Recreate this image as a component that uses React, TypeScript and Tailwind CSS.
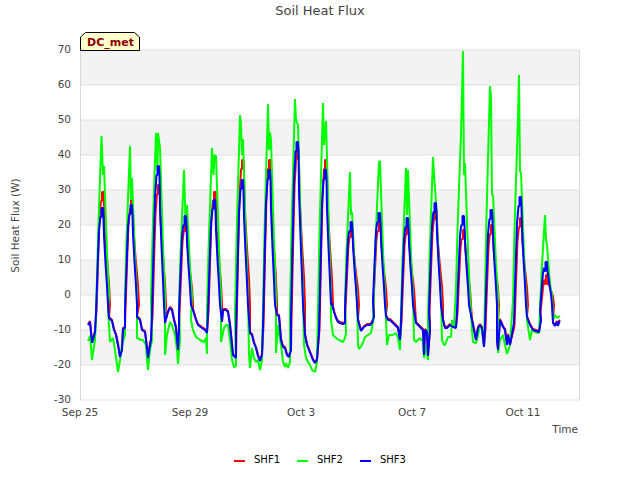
type P = [number, number];
type Cycle = { c: number; b: number; r: number; g: P[] };

const cycles: Cycle[] = [
  { c: 102, b: 208, r: 192, g: [[101.5, 136], [103, 175], [104, 166]] },
  { c: 131, b: 205, r: 200, g: [[130, 146], [131, 200], [132, 178]] },
  { c: 158, b: 166, r: 185, g: [[156, 133], [157.5, 170], [158, 133], [160, 148]] },
  { c: 185, b: 216, r: 222, g: [[184, 170], [185.5, 220], [187, 205]] },
  { c: 214, b: 200, r: 192, g: [[212, 148], [213.5, 175], [214.5, 155], [216, 156]] },
  { c: 242, b: 180, r: 160, g: [[240, 115], [241, 124], [242, 155], [243, 139]] },
  { c: 269, b: 170, r: 160, g: [[268, 104], [269, 150], [270, 132], [271, 140]] },
  { c: 297, b: 142, r: 150, g: [[295, 99], [296, 120], [298, 125]] },
  { c: 325, b: 170, r: 160, g: [[323, 103], [324, 145], [326, 121]] },
  { c: 351, b: 222, r: 228, g: [[350, 172], [351, 215], [352, 212]] },
  { c: 379, b: 213, r: 222, g: [[379, 162], [380, 161]] },
  { c: 407, b: 218, r: 225, g: [[406, 168], [407, 215], [408, 170]] },
  { c: 435, b: 203, r: 210, g: [[433, 157], [434, 175], [436, 202]] },
  { c: 463, b: 216, r: 230, g: [[461, 134], [463, 51], [464, 175], [465, 163]] },
  { c: 491, b: 210, r: 225, g: [[490, 86], [491, 97], [492, 195], [493, 195]] },
  { c: 520, b: 197, r: 218, g: [[518, 117], [519, 75], [520, 172], [521, 172]] },
  { c: 546, b: 262, r: 275, g: [[545, 215], [546, 240], [547, 245]] },
];

const nightsB: P[][] = [
  [[88, 325], [90, 322], [92, 343], [95, 332]],
  [[109, 318], [112, 321], [114, 330], [116, 335], [118, 345], [120, 357], [122, 350], [123, 329], [125, 328]],
  [[137, 317], [140, 320], [142, 330], [145, 332], [146, 340], [148, 358], [150, 345], [151, 340]],
  [[165, 323], [168, 312], [170, 308], [172, 310], [174, 320], [176, 328], [178, 350], [179, 330]],
  [[193, 310], [196, 320], [198, 325], [202, 328], [205, 330], [207, 333]],
  [[222, 322], [223, 310], [226, 310], [228, 312], [230, 325], [232, 345], [233, 355], [236, 358]],
  [[250, 333], [252, 335], [254, 343], [256, 348], [258, 356], [260, 361], [262, 355]],
  [[277, 315], [279, 316], [281, 340], [283, 347], [285, 348], [287, 355], [289, 357], [291, 350]],
  [[305, 335], [307, 345], [309, 350], [311, 355], [313, 360], [315, 363], [317, 360]],
  [[332, 303], [334, 312], [336, 318], [338, 322], [340, 323], [343, 324], [345, 323]],
  [[358, 320], [361, 331], [364, 327], [367, 325], [370, 325], [372, 323], [374, 317]],
  [[386, 316], [388, 320], [390, 320], [392, 322], [395, 325], [398, 328], [400, 340]],
  [[416, 323], [420, 327], [423, 330], [424, 355], [425, 330], [427, 332], [428, 356], [430, 330]],
  [[443, 320], [445, 328], [447, 328], [450, 325], [453, 327], [456, 328]],
  [[472, 320], [474, 330], [476, 340], [478, 328], [480, 325], [482, 328], [484, 347]],
  [[497, 340], [498, 350], [500, 320], [503, 327], [505, 330], [507, 345], [508, 335], [510, 345]],
  [[527, 317], [530, 325], [533, 330], [536, 331], [539, 332], [541, 320]],
  [[553, 323], [555, 326], [557, 322], [558, 326], [559, 322], [560, 321]],
];

const nightsG: P[][] = [
  [[88, 341], [90, 336], [92, 360], [95, 340]],
  [[108, 310], [110, 342], [113, 338], [115, 350], [118, 372], [120, 360], [122, 345], [125, 335]],
  [[137, 338], [141, 340], [143, 340], [146, 345], [147, 360], [148, 370], [150, 350], [152, 340]],
  [[165, 355], [167, 335], [170, 322], [172, 325], [175, 335], [177, 350], [178, 364], [180, 340]],
  [[191, 320], [193, 330], [196, 337], [200, 340], [204, 342], [206, 338], [207, 354]],
  [[221, 342], [224, 328], [226, 325], [228, 325], [230, 340], [232, 360], [234, 367], [236, 366]],
  [[249, 355], [250, 368], [252, 348], [254, 358], [256, 362], [258, 360], [260, 370], [262, 360]],
  [[276, 353], [278, 325], [281, 345], [283, 362], [285, 367], [286, 363], [288, 368], [290, 362]],
  [[304, 345], [306, 358], [308, 362], [310, 365], [312, 370], [315, 372], [317, 362]],
  [[331, 320], [333, 335], [336, 338], [339, 340], [343, 342], [345, 338], [346, 333]],
  [[358, 345], [359, 349], [362, 345], [365, 337], [368, 335], [371, 333], [373, 322]],
  [[387, 345], [389, 335], [393, 335], [396, 333], [398, 338], [400, 350]],
  [[414, 340], [416, 342], [420, 338], [423, 342], [424, 358], [426, 345], [428, 360]],
  [[442, 340], [444, 345], [445, 345], [448, 337], [451, 337], [452, 320], [454, 327]],
  [[472, 330], [473, 342], [476, 343], [477, 340], [480, 325], [482, 330], [484, 347]],
  [[498, 353], [500, 340], [503, 335], [505, 345], [507, 354], [510, 345]],
  [[527, 320], [530, 340], [532, 330], [535, 332], [539, 333]],
  [[553, 320], [555, 315], [557, 318], [560, 316]],
];

const lerp = (a: number, b: number, t: number) => a + (b - a) * t;

function buildBlue(offsetY: number, key: "b" | "r", shift: number, fall: number): string {
  const pts: P[] = [];
  nightsB.forEach((n, i) => {
    n.forEach(([x, y]) => pts.push([x, y + offsetY]));
    const cy = cycles[i];
    if (!cy) return;
    const top = cy[key];
    const c = cy.c + shift;
    const last = n[n.length - 1][1];
    pts.push(
      [c - 6, lerp(last, top, 0.15)],
      [c - 4.5, lerp(last, top, 0.5)],
      [c - 3, lerp(last, top, 0.82)],
      [c - 2, lerp(last, top, 0.9)],
      [c - 1.5, top + 9],
      [c - 0.5, top + 9],
      [c - 0.5, top],
      [c + 1, top],
      [c + 1.5, top + 10],
      [c + 2, lerp(top, 300, 0.3)],
      [c + 3.5 + fall * 0.5, lerp(top, 300, 0.6)],
      [c + 5 + fall, lerp(top, 300, 0.85)],
      [c + 6 + fall, 305],
    );
  });
  return pts.map((p) => p.join(",")).join(" ");
}

function buildGreen(): string {
  const pts: P[] = [];
  nightsG.forEach((n, i) => {
    n.forEach((p) => pts.push(p));
    const cy = cycles[i];
    if (!cy) return;
    const first = cy.g[0];
    const lastP = cy.g[cy.g.length - 1];
    const last = n[n.length - 1][1];
    pts.push([first[0] - 5, lerp(last, first[1], 0.2)], [first[0] - 3.5, lerp(last, first[1], 0.5)], [first[0] - 2, lerp(last, first[1], 0.72)]);
    cy.g.forEach((p) => pts.push(p));
    pts.push([lastP[0] + 1.5, lerp(lastP[1], 310, 0.3)], [lastP[0] + 3, lerp(lastP[1], 310, 0.6)], [lastP[0] + 5, 295]);
  });
  return pts.map((p) => p.join(",")).join(" ");
}

const yTicks = [70, 60, 50, 40, 30, 20, 10, 0, -10, -20, -30];
const xTicks: [number, string][] = [[80, "Sep 25"], [190, "Sep 29"], [301, "Oct 3"], [412, "Oct 7"], [523, "Oct 11"]];
const bands = [50, 120, 190, 260, 330];
const font = "font-['DejaVu_Sans',sans-serif]";

function LegendItem({ label, color }: { label: string; color: string }) {
  return (
    <div className="flex items-center gap-[9px]">
      <div className={`mt-[2px] h-[2px] w-[11px] ${color}`} />
      <span className="text-[10px] leading-none text-black">{label}</span>
    </div>
  );
}

export default function App() {
  return (
    <div className={`flex h-[480px] w-[640px] flex-col bg-white ${font}`}>
      <div className="h-[22px] pt-[3px] text-center text-[13px] leading-[16px] text-[#444444]">Soil Heat Flux</div>
      <svg width="640" height="428" viewBox="0 22 640 428" className="block">
        {bands.map((y) => (
          <rect key={y} x="80" y={y} width="500" height="35" fill="#f3f3f3" />
        ))}
        {yTicks.map((t, i) => (
          <line key={t} x1="80" x2="580" y1={50 + i * 35} y2={50 + i * 35} stroke="#e0e0e0" strokeWidth="1" />
        ))}
        <line x1="80.5" x2="80.5" y1="50" y2="400" stroke="#d8d8d8" />
        <line x1="579.5" x2="579.5" y1="50" y2="400" stroke="#d8d8d8" />
        <polyline points={buildBlue(-1, "r", 0.5, 1.5)} fill="none" stroke="#ff0000" strokeWidth="2" strokeLinejoin="bevel" />
        <polyline points={buildGreen()} fill="none" stroke="#00ff00" strokeWidth="2" strokeLinejoin="bevel" />
        <polyline points={buildBlue(0, "b", 0, 0)} fill="none" stroke="#0000ff" strokeWidth="2" strokeLinejoin="bevel" />
        {yTicks.map((t, i) => (
          <text key={t} x="71" y={53 + i * 35} textAnchor="end" fontSize="10.5" fill="#444444">{t}</text>
        ))}
        {xTicks.map(([x, l]) => (
          <text key={l} x={x} y="415.5" textAnchor="middle" fontSize="10.5" fill="#444444">{l}</text>
        ))}
        <text x="578" y="433" textAnchor="end" fontSize="10.5" fill="#444444">Time</text>
        <text x="0" y="0" transform="translate(18.5 225.5) rotate(-90)" textAnchor="middle" fontSize="10.5" fill="#444444">Soil Heat Flux (W)</text>
        <polygon points="80.5,50.5 80.5,37 85.5,32.5 134.5,32.5 139.5,37 139.5,50.5" fill="#ffffcc" stroke="#000000" />
        <text x="87" y="46" fontSize="11" fontWeight="bold" fill="#8b0000">DC_met</text>
      </svg>
      <div className="flex h-[30px] items-start justify-center gap-[17px] pt-[5px]">
        <LegendItem label="SHF1" color="bg-[#ff0000]" />
        <LegendItem label="SHF2" color="bg-[#00ff00]" />
        <LegendItem label="SHF3" color="bg-[#0000ff]" />
      </div>
    </div>
  );
}
